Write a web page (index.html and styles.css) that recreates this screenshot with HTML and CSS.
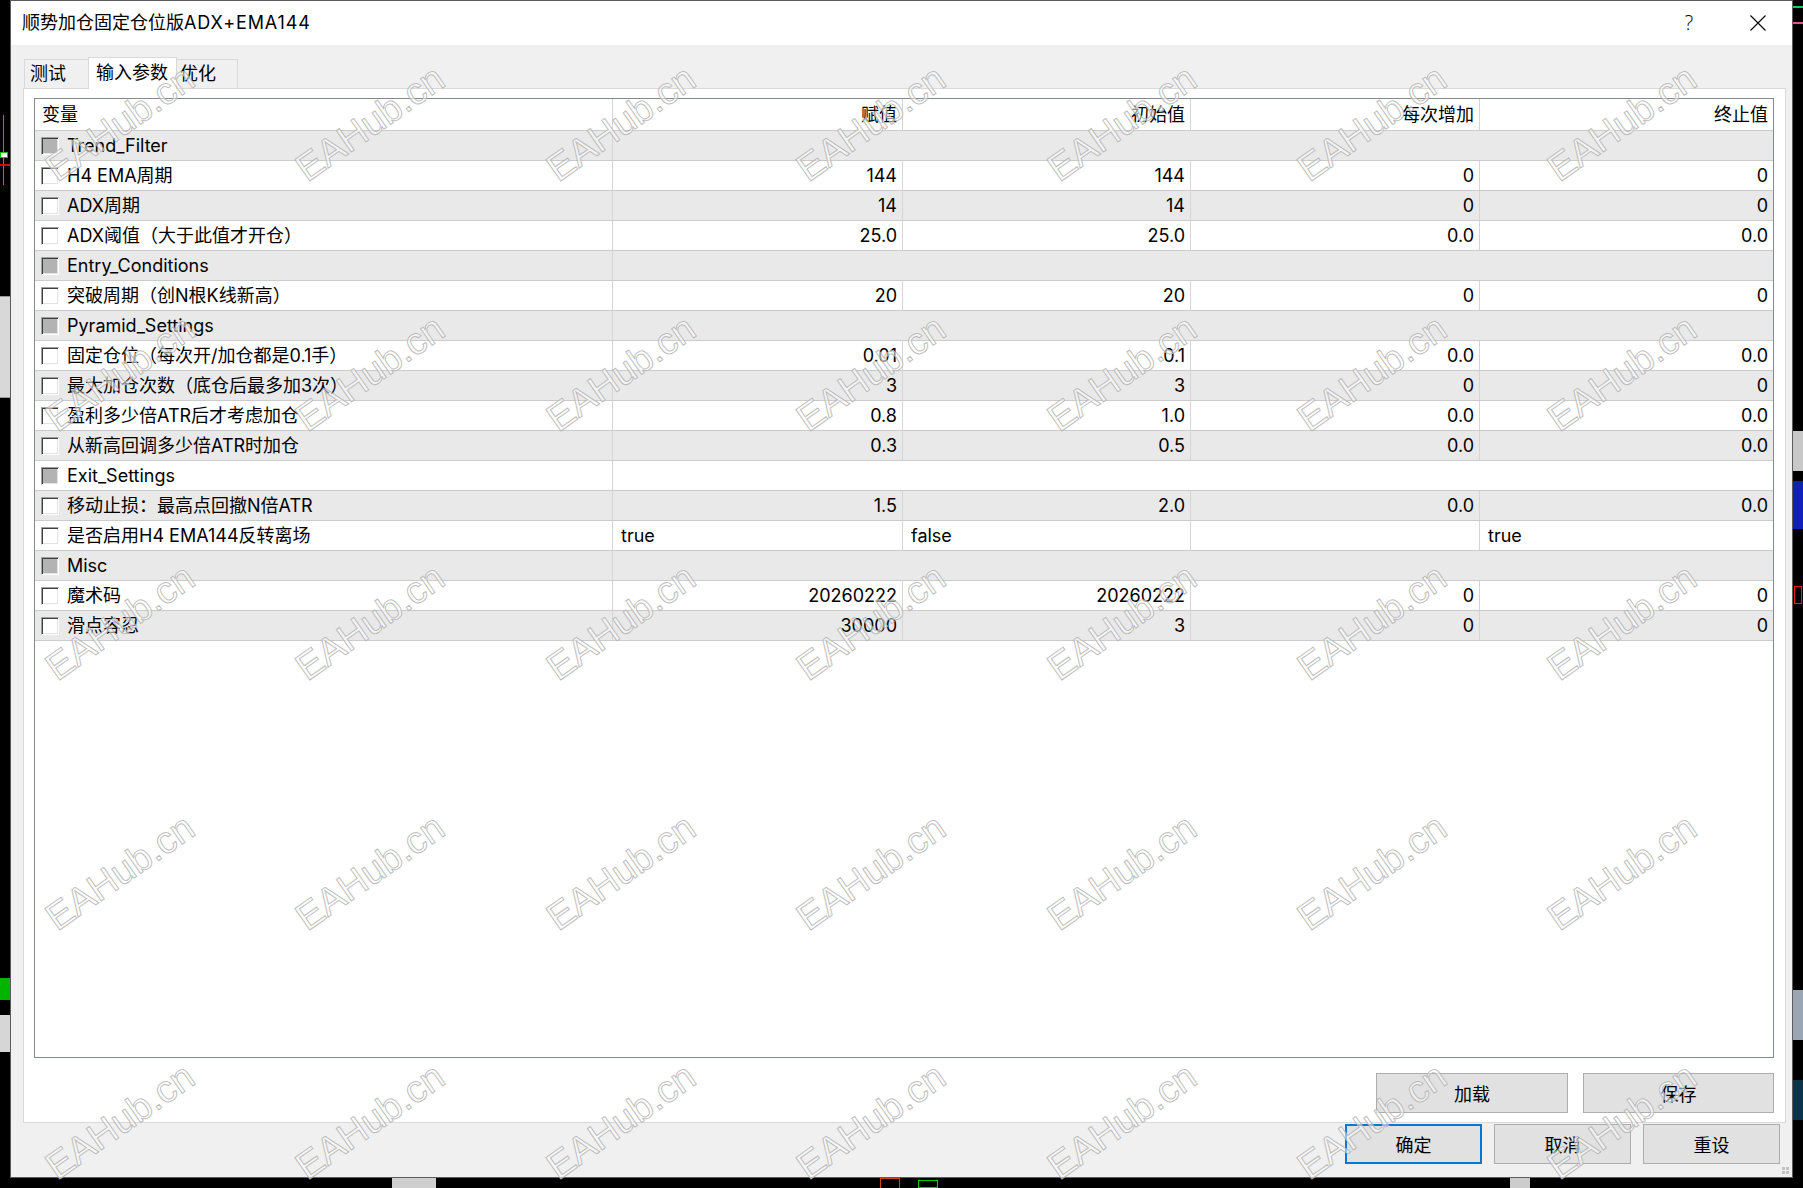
FILE: index.html
```html
<!DOCTYPE html>
<html lang="zh-CN">
<head>
<meta charset="utf-8">
<title>顺势加仓固定仓位版ADX+EMA144</title>
<link rel="stylesheet" href="styles.css">
</head>
<body>
  <!-- chart terminal peeking out around the dialog -->
  <div class="chart">
    <i class="bit l-green-line"></i>
    <i class="bit l-white-box"></i>
    <i class="bit l-red-line"></i>
    <i class="bit l-panel"></i>
    <i class="bit l-green-box"></i>
    <i class="bit l-gray-box"></i>
    <i class="bit r-green-tick"></i>
    <i class="bit r-pink-tick"></i>
    <i class="bit r-white-box"></i>
    <i class="bit r-blue-box"></i>
    <i class="bit r-candle"></i>
    <i class="bit r-gray-box"></i>
    <i class="bit r-dark-box"></i>
    <i class="bit b-gray-1"></i>
    <i class="bit b-gray-2"></i>
    <i class="bit b-green"></i>
    <i class="bit b-red"></i>
  </div>

  <div class="dialog">
    <div class="titlebar">
      <span class="title">顺势加仓固定仓位版<span class="title-code">ADX+EMA144</span></span>
      <span class="help">?</span>
      <span class="close">
        <svg width="16" height="16" viewBox="0 0 16 16"><path d="M0.5 0.5 L15.5 15.5 M15.5 0.5 L0.5 15.5" stroke="#000" stroke-width="1.1" fill="none"/></svg>
      </span>
    </div>

    <div class="client">
      <div class="tabs">
        <div class="tab tab-test">测试</div>
        <div class="tab tab-inputs active">输入参数</div>
        <div class="tab tab-opt">优化</div>
      </div>

      <div class="panel">
        <div class="table">
          <div class="row head">
            <div class="cell">变量</div>
            <div class="cell num">赋值</div>
            <div class="cell num">初始值</div>
            <div class="cell num">每次增加</div>
            <div class="cell num last">终止值</div>
          </div>

          <div class="row group alt">
            <div class="cell"><span class="check group-check"></span>Trend_Filter</div>
            <div class="cell last"></div>
          </div>
          <div class="row">
            <div class="cell"><span class="check"></span>H4 EMA周期</div>
            <div class="cell num">144</div>
            <div class="cell num">144</div>
            <div class="cell num">0</div>
            <div class="cell num last">0</div>
          </div>
          <div class="row alt">
            <div class="cell"><span class="check"></span>ADX周期</div>
            <div class="cell num">14</div>
            <div class="cell num">14</div>
            <div class="cell num">0</div>
            <div class="cell num last">0</div>
          </div>
          <div class="row">
            <div class="cell"><span class="check"></span>ADX阈值（大于此值才开仓）</div>
            <div class="cell num">25.0</div>
            <div class="cell num">25.0</div>
            <div class="cell num">0.0</div>
            <div class="cell num last">0.0</div>
          </div>

          <div class="row group alt">
            <div class="cell"><span class="check group-check"></span>Entry_Conditions</div>
            <div class="cell last"></div>
          </div>
          <div class="row">
            <div class="cell"><span class="check"></span>突破周期（创N根K线新高）</div>
            <div class="cell num">20</div>
            <div class="cell num">20</div>
            <div class="cell num">0</div>
            <div class="cell num last">0</div>
          </div>

          <div class="row group alt">
            <div class="cell"><span class="check group-check"></span>Pyramid_Settings</div>
            <div class="cell last"></div>
          </div>
          <div class="row">
            <div class="cell"><span class="check"></span>固定仓位（每次开/加仓都是0.1手）</div>
            <div class="cell num">0.01</div>
            <div class="cell num">0.1</div>
            <div class="cell num">0.0</div>
            <div class="cell num last">0.0</div>
          </div>
          <div class="row alt">
            <div class="cell"><span class="check"></span>最大加仓次数（底仓后最多加3次）</div>
            <div class="cell num">3</div>
            <div class="cell num">3</div>
            <div class="cell num">0</div>
            <div class="cell num last">0</div>
          </div>
          <div class="row">
            <div class="cell"><span class="check"></span>盈利多少倍ATR后才考虑加仓</div>
            <div class="cell num">0.8</div>
            <div class="cell num">1.0</div>
            <div class="cell num">0.0</div>
            <div class="cell num last">0.0</div>
          </div>
          <div class="row alt">
            <div class="cell"><span class="check"></span>从新高回调多少倍ATR时加仓</div>
            <div class="cell num">0.3</div>
            <div class="cell num">0.5</div>
            <div class="cell num">0.0</div>
            <div class="cell num last">0.0</div>
          </div>

          <div class="row group">
            <div class="cell"><span class="check group-check"></span>Exit_Settings</div>
            <div class="cell last"></div>
          </div>
          <div class="row alt">
            <div class="cell"><span class="check"></span>移动止损：最高点回撤N倍ATR</div>
            <div class="cell num">1.5</div>
            <div class="cell num">2.0</div>
            <div class="cell num">0.0</div>
            <div class="cell num last">0.0</div>
          </div>
          <div class="row">
            <div class="cell"><span class="check"></span>是否启用H4 EMA144反转离场</div>
            <div class="cell text">true</div>
            <div class="cell text">false</div>
            <div class="cell text"></div>
            <div class="cell text last">true</div>
          </div>

          <div class="row group alt">
            <div class="cell"><span class="check group-check"></span>Misc</div>
            <div class="cell last"></div>
          </div>
          <div class="row">
            <div class="cell"><span class="check"></span>魔术码</div>
            <div class="cell num">20260222</div>
            <div class="cell num">20260222</div>
            <div class="cell num">0</div>
            <div class="cell num last">0</div>
          </div>
          <div class="row alt">
            <div class="cell"><span class="check"></span>滑点容忍</div>
            <div class="cell num">30000</div>
            <div class="cell num">3</div>
            <div class="cell num">0</div>
            <div class="cell num last">0</div>
          </div>
        </div>

        <div class="panel-actions">
          <button class="btn btn-load">加载</button>
          <button class="btn btn-save">保存</button>
        </div>
      </div>

      <div class="dialog-actions">
        <button class="btn btn-wide default">确定</button>
        <button class="btn btn-wide">取消</button>
        <button class="btn btn-wide">重设</button>
      </div>
    </div>

    <span class="grip"><i></i><i></i><i></i><i></i></span>
  </div>

  <!-- site watermark tiled over the window -->
  <div class="watermark">
    <div class="wm-grid">
      <span>EAHub.cn</span><span>EAHub.cn</span><span>EAHub.cn</span><span>EAHub.cn</span><span>EAHub.cn</span><span>EAHub.cn</span><span>EAHub.cn</span>
      <span>EAHub.cn</span><span>EAHub.cn</span><span>EAHub.cn</span><span>EAHub.cn</span><span>EAHub.cn</span><span>EAHub.cn</span><span>EAHub.cn</span>
      <span>EAHub.cn</span><span>EAHub.cn</span><span>EAHub.cn</span><span>EAHub.cn</span><span>EAHub.cn</span><span>EAHub.cn</span><span>EAHub.cn</span>
      <span>EAHub.cn</span><span>EAHub.cn</span><span>EAHub.cn</span><span>EAHub.cn</span><span>EAHub.cn</span><span>EAHub.cn</span><span>EAHub.cn</span>
      <span>EAHub.cn</span><span>EAHub.cn</span><span>EAHub.cn</span><span>EAHub.cn</span><span>EAHub.cn</span><span>EAHub.cn</span><span>EAHub.cn</span>
    </div>
  </div>
</body>
</html>
```

FILE: styles.css
```css
* {
  box-sizing: border-box;
}

html,
body {
  margin: 0;
  padding: 0;
}

html {
  overflow: hidden;
}

body {
  position: relative;
  width: 1803px;
  height: 1188px;
  overflow: hidden;
  background: #000;
  font-family: Inter, "Noto Sans CJK SC", sans-serif;
  font-size: 18px;
  color: #000;
}

/* ---------- terminal chart behind the dialog ---------- */
.chart {
  position: absolute;
  inset: 0;
}

.bit {
  position: absolute;
  display: block;
}

.l-green-line { left: 3px; top: 115px; width: 1px; height: 70px; background: #00d000; }
.l-white-box { left: 0; top: 152px; width: 8px; height: 6px; background: #fff; border: 1px solid #00c000; }
.l-red-line { left: 0; top: 164px; width: 10px; height: 2px; background: #e00000; }
.l-panel { left: 0; top: 296px; width: 10px; height: 102px; background: #d8d8d8; border-top: 1px solid #999; border-bottom: 1px solid #999; }
.l-green-box { left: 0; top: 978px; width: 10px; height: 22px; background: #00b400; }
.l-gray-box { left: 0; top: 1015px; width: 10px; height: 37px; background: #d6d6d6; }

.r-green-tick { left: 1793px; top: 6px; width: 10px; height: 2px; background: #00d060; }
.r-pink-tick { left: 1793px; top: 22px; width: 10px; height: 2px; background: #e0509a; }
.r-white-box { left: 1793px; top: 431px; width: 10px; height: 40px; background: #c8c8c8; }
.r-blue-box { left: 1793px; top: 481px; width: 10px; height: 48px; background: #1020b8; }
.r-candle { left: 1794px; top: 586px; width: 8px; height: 18px; border: 1px solid #e02020; }
.r-gray-box { left: 1793px; top: 990px; width: 10px; height: 50px; background: #9aa6b4; }
.r-dark-box { left: 1793px; top: 1080px; width: 10px; height: 40px; background: #0a3448; }

.b-gray-1 { left: 392px; top: 1178px; width: 44px; height: 10px; background: #cfcfcf; }
.b-gray-2 { left: 1510px; top: 1178px; width: 20px; height: 10px; background: #ccc; }
.b-green { left: 918px; top: 1180px; width: 20px; height: 8px; border: 1px solid #00d000; }
.b-red { left: 880px; top: 1178px; width: 20px; height: 10px; border: 1px solid #d04010; border-bottom: none; }

/* ---------- dialog window ---------- */
.dialog {
  position: relative;
  z-index: 1;
  margin-left: 10px;
  width: 1783px;
  height: 1178px;
  border: 1px solid #5c5c5c;
  background: #f0f0f0;
  display: flex;
  flex-direction: column;
}

.titlebar {
  height: 44px;
  flex: none;
  background: #fff;
  display: flex;
  align-items: center;
  padding-left: 11px;
}

.title {
  flex: 1;
  font-size: 18px;
  line-height: 24px;
}

.title-code {
  letter-spacing: 0.9px;
}

.help {
  width: 70px;
  text-align: center;
  font-family: "Open Sans", sans-serif;
  font-weight: 300;
  font-size: 20px;
  line-height: 24px;
}

.close {
  width: 68px;
  height: 44px;
  display: flex;
  align-items: center;
  justify-content: center;
}

.close svg {
  display: block;
}

.client {
  flex: 1;
  padding: 12px 6px 0 12px;
}

/* ---------- tabs ---------- */
.tabs {
  display: flex;
  align-items: flex-end;
  height: 31px;
  padding-left: 1px;
}

.tab {
  height: 29px;
  border: 1px solid #d9d9d9;
  border-bottom: none;
  background: #f0f0f0;
  line-height: 27px;
  white-space: nowrap;
}

.tab-test {
  width: 65px;
  padding-left: 5px;
  margin-right: -1px;
}

.tab-inputs {
  width: 89px;
  padding-left: 7px;
}

.tab-opt {
  width: 62px;
  padding-left: 3px;
  margin-left: -1px;
}

.tab.active {
  position: relative;
  z-index: 1;
  height: 32px;
  margin-bottom: -1px;
  background: #fff;
  line-height: 29px;
}

/* ---------- tab page ---------- */
.panel {
  height: 1035px;
  border: 1px solid #d9d9d9;
  background: #fff;
  padding: 9px 11px 0 10px;
}

.table {
  height: 960px;
  border: 1px solid #828790;
  background: #fff;
  overflow: hidden;
}

.row {
  display: grid;
  grid-template-columns: 578px 290px 288px 289px 1fr;
  height: 30px;
  border-bottom: 1px solid #cbcbcb;
}

.row.head {
  height: 32px;
  background: #fff;
}

.row.group {
  grid-template-columns: 578px 1fr;
}

.row.alt {
  background: #e9e9e9;
}

.cell {
  display: flex;
  align-items: center;
  padding: 0 5px 0 7px;
  border-right: 1px solid #d5d5d5;
  white-space: nowrap;
  overflow: hidden;
  line-height: 24px;
}

.cell.last {
  border-right: none;
}

.cell.num {
  justify-content: flex-end;
}

.cell.text {
  padding-left: 8px;
}

/* sunken 3D check box */
.check {
  flex: none;
  width: 18px;
  height: 18px;
  margin: 0 8px 0 -1px;
  background: #fff;
  border-top: 1px solid #a0a0a0;
  border-left: 1px solid #a0a0a0;
  border-right: 1px solid #fff;
  border-bottom: 1px solid #fff;
  box-shadow: inset 1px 1px 0 #3f3f3f, inset -1px -1px 0 #e3e3e3;
}

.check.group-check {
  background: #b3b3b3;
}

/* ---------- buttons ---------- */
.panel-actions {
  display: flex;
  justify-content: flex-end;
  gap: 15px;
  margin-top: 15px;
}

.btn {
  height: 40px;
  margin: 0;
  padding: 0;
  background: #e1e1e1;
  border: 1px solid #adadad;
  font-family: Inter, "Noto Sans CJK SC", sans-serif;
  font-size: 18px;
  color: #000;
}

.btn-load {
  width: 192px;
}

.btn-save {
  width: 191px;
}

.dialog-actions {
  display: flex;
  justify-content: flex-end;
  gap: 12px;
  margin-top: 1px;
  margin-right: 6px;
}

.btn-wide {
  width: 137px;
}

.btn.default {
  border: 2px solid #0078d7;
}

/* resize grip in the corner */
.grip {
  position: absolute;
  right: 3px;
  bottom: 3px;
  width: 7px;
  height: 7px;
  display: grid;
  grid-template-columns: 3px 3px;
  grid-template-rows: 3px 3px;
  gap: 1px;
}

.grip i {
  background: #c3c3c3;
}

/* ---------- watermark ---------- */
.watermark {
  position: absolute;
  left: 0;
  top: 0;
  z-index: 5;
  width: 1803px;
  height: 1188px;
  overflow: hidden;
  pointer-events: none;
}

.wm-grid {
  margin: -1px 0 0 -5px;
  display: grid;
  grid-template-columns: repeat(7, 250.4px);
  grid-template-rows: repeat(5, 249.5px);
}

.watermark span {
  display: flex;
  align-items: center;
  justify-content: center;
  font-family: "Liberation Sans", Arial, sans-serif;
  font-size: 38px;
  white-space: nowrap;
  color: rgba(255, 255, 255, 0.55);
  -webkit-text-stroke: 1px rgba(178, 178, 178, 0.85);
  transform: rotate(-35deg);
}
```
